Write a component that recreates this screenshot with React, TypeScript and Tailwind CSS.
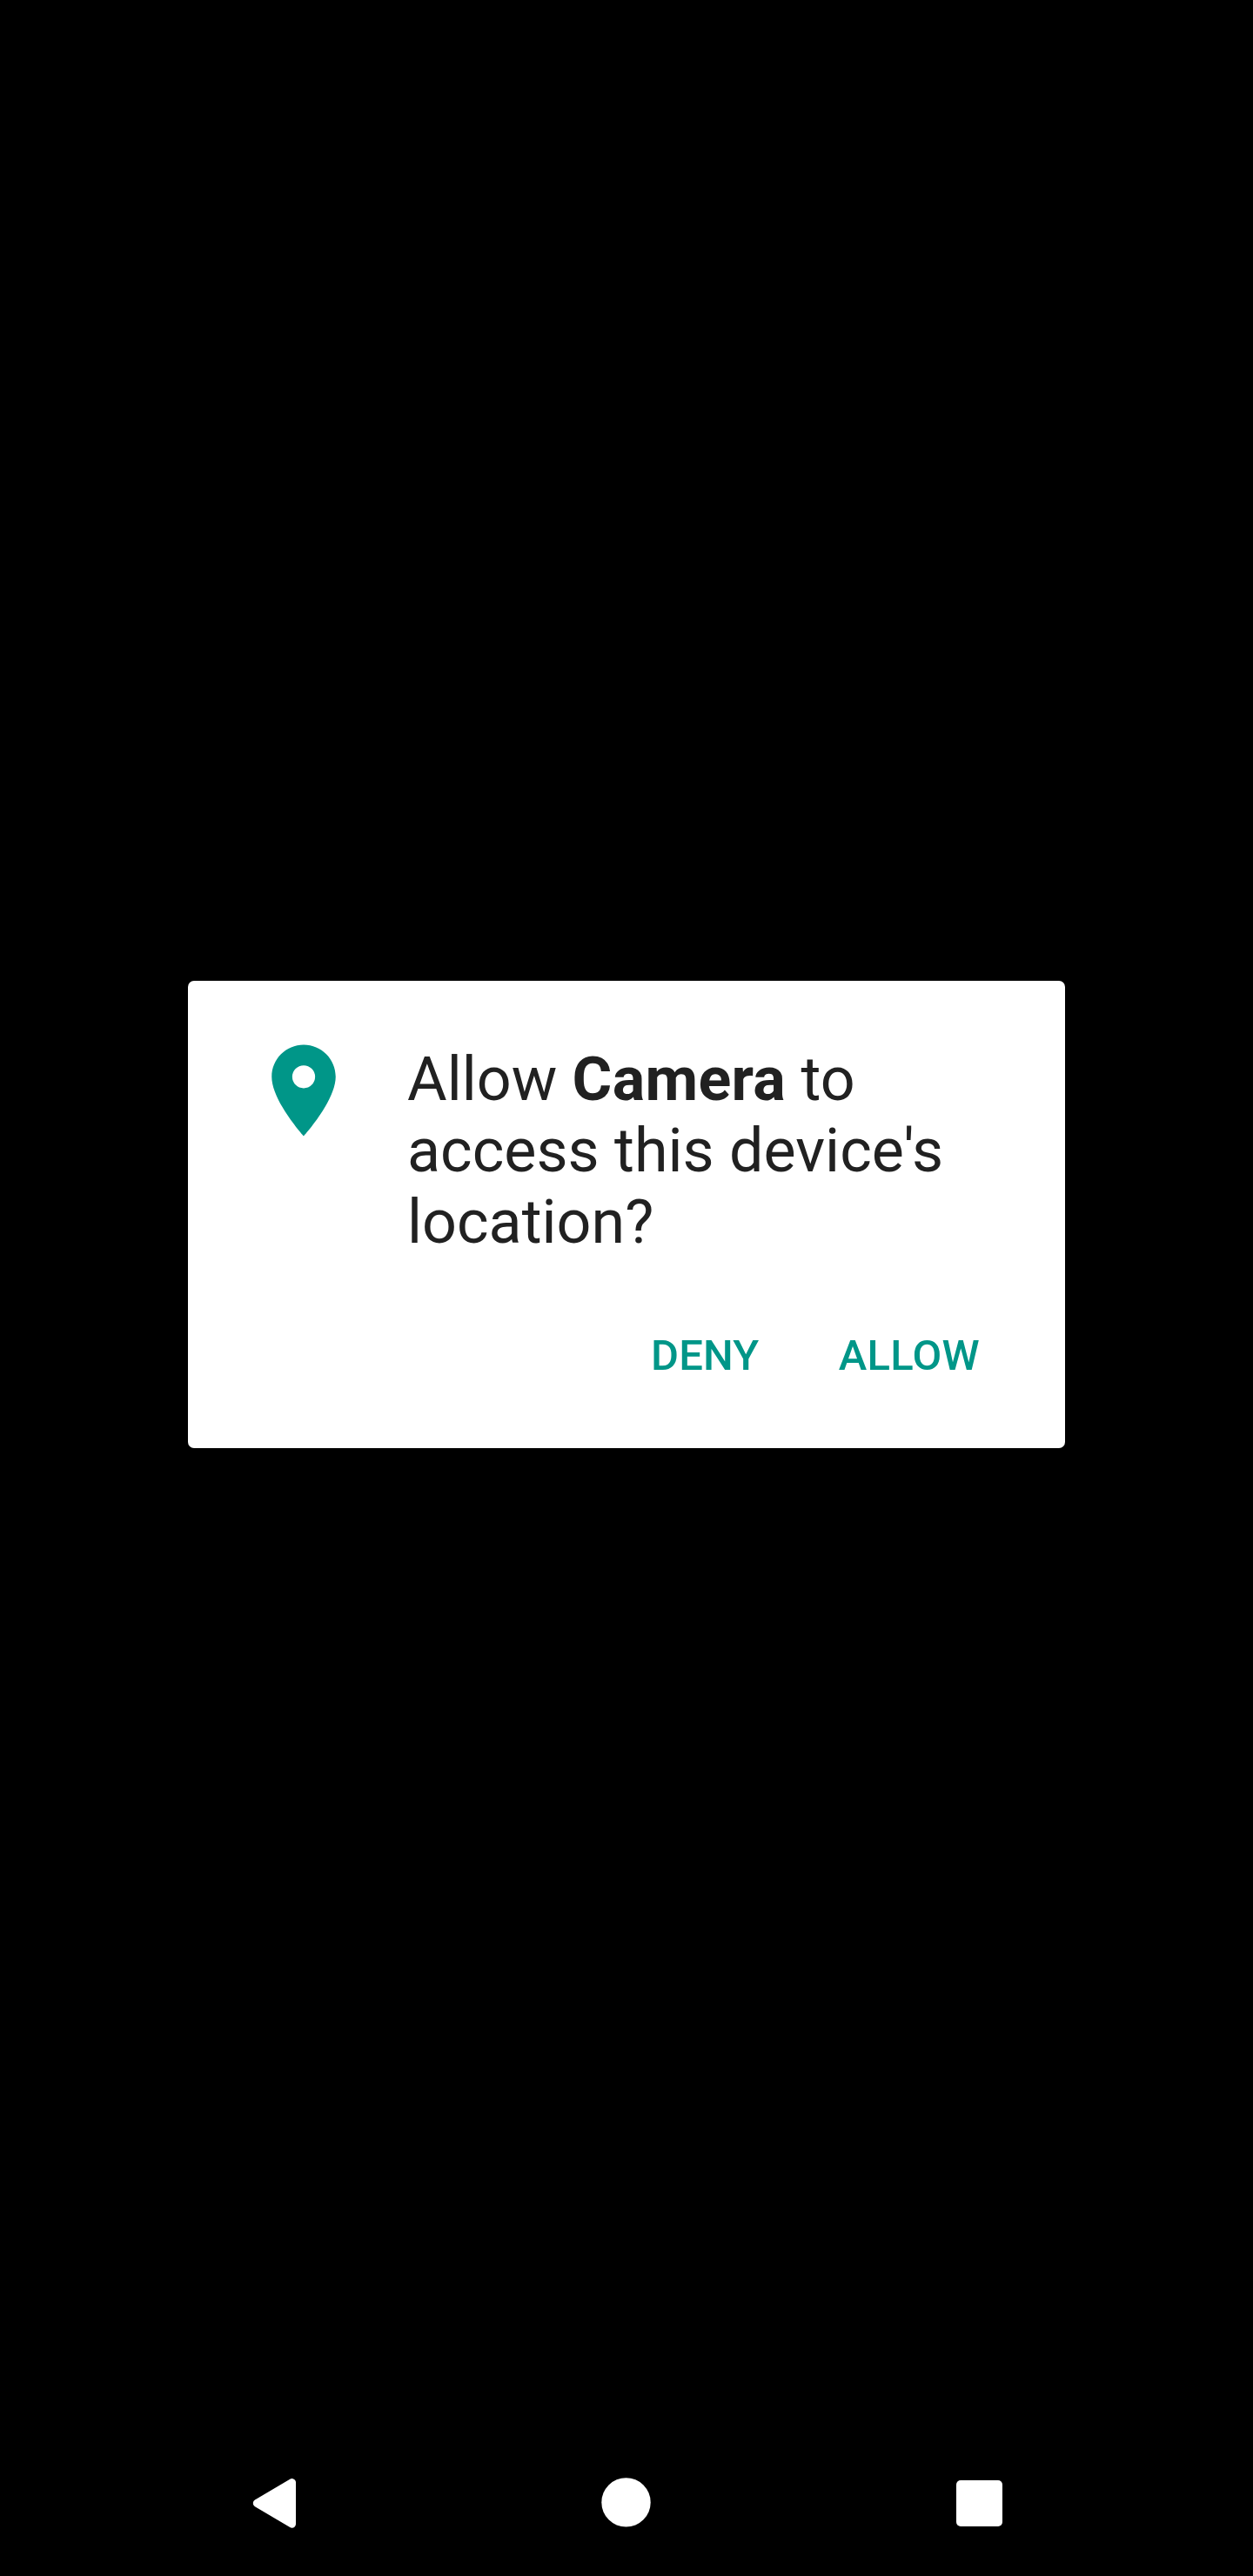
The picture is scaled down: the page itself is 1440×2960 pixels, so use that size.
function LocationPin() {
  return (
    <svg className="size-[126px] shrink-0" viewBox="0 0 24 24" fill="#009688">
      <path d="M12 2C8.13 2 5 5.13 5 9c0 5.25 7 13 7 13s7-7.75 7-13c0-3.87-3.13-7-7-7zm0 9.500a2.500 2.500 0 0 1 0-5 2.500 2.500 0 0 1 0 5z" />
    </svg>
  );
}

function NavigationBar() {
  return (
    <nav className="flex h-[170px] items-center justify-center gap-[315px]">
      <button aria-label="Back">
        <svg className="size-[90px]" viewBox="0 0 90 90" fill="#fff">
          <path d="M25.300 46.400L65.500 22.500V70.200Z" stroke="#fff" strokeWidth="9" strokeLinejoin="round" />
        </svg>
      </button>
      <button aria-label="Home">
        <svg className="size-[90px]" viewBox="0 0 90 90" fill="#fff">
          <circle cx="44.500" cy="45.400" r="28.200" />
        </svg>
      </button>
      <button aria-label="Recent apps">
        <svg className="size-[90px]" viewBox="0 0 90 90" fill="#fff">
          <rect x="19" y="20" width="53" height="53" rx="5" />
        </svg>
      </button>
    </nav>
  );
}

export default function App() {
  return (
    <div className="flex h-[2960px] w-[1440px] flex-col bg-black font-['Roboto',sans-serif]">
      <main className="flex grow flex-col items-center pt-[1127px]">
        <section className="flex h-[537px] w-[1008px] flex-col rounded-[7px] bg-white pt-[63px]">
          <div className="flex pl-[70px]">
            <LocationPin />
            <p className="ml-[56px] pt-[9px] text-[70px] leading-[82px] whitespace-nowrap text-[#212121]">
              Allow <b className="font-bold tracking-[0.3px]">Camera</b> to
              <br />
              access this device's
              <br />
              location?
            </p>
          </div>
          <div className="mt-[84px] flex justify-end gap-[91.5px] pr-[98px] text-[49px] leading-[58px] font-medium text-[#009688]">
            <button className="tracking-[0.1px]">DENY</button>
            <button className="tracking-[0.3px]">ALLOW</button>
          </div>
        </section>
      </main>
      <NavigationBar />
    </div>
  );
}
